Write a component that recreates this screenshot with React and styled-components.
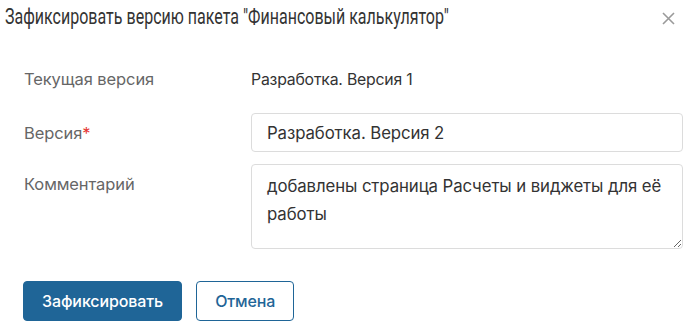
import React, { useState } from 'react';
import styled, { createGlobalStyle } from 'styled-components';

const GlobalStyle = createGlobalStyle`
  html, body {
    margin: 0;
    padding: 0;
    background: #fff;
  }
  * {
    box-sizing: border-box;
  }
`;

const Dialog = styled.div`
  width: 689px;
  height: 331px;
  background: #fff;
  font-family: Inter, "Noto Sans", sans-serif;
  display: flex;
  flex-direction: column;
`;

const Header = styled.div`
  display: flex;
  align-items: center;
  justify-content: space-between;
  height: 36px;
  padding: 0 14px 0 5px;
`;

// the original uses a condensed face; Roboto is squeezed to the same width
const Title = styled.h1`
  margin: 0 0 4px;
  font-family: Roboto, "Liberation Sans", sans-serif;
  font-size: 22px;
  font-weight: 400;
  color: #333;
  white-space: nowrap;
  transform: scaleX(0.728);
  transform-origin: left center;
`;

const CloseButton = styled.button`
  border: none;
  background: none;
  padding: 0;
  width: 14px;
  height: 14px;
  display: flex;
  align-items: center;
  justify-content: center;
  cursor: pointer;
`;

const Body = styled.div`
  padding: 28px 6px 0 24px;
  display: flex;
  flex-direction: column;
`;

const Row = styled.div`
  display: grid;
  grid-template-columns: 227px 1fr;
  align-items: ${(p) => (p.$top ? 'start' : 'center')};
  min-height: ${(p) => p.$h || 39}px;
  margin-top: ${(p) => p.$mt || 0}px;
`;

const Label = styled.label`
  font-size: 16.5px;
  letter-spacing: -0.1px;
  color: #666;
  padding-top: ${(p) => (p.$top ? '10px' : '0')};
`;

const Required = styled.span`
  color: #e53935;
`;

const Value = styled.div`
  font-size: 15.8px;
  letter-spacing: -0.2px;
  color: #333;
`;

const Input = styled.input`
  width: 100%;
  height: 39px;
  border: 1px solid #dcdcdc;
  border-radius: 4px;
  padding: 0 15px;
  font-family: inherit;
  font-size: 16.8px;
  letter-spacing: -0.1px;
  color: #333;
  outline: none;
`;

const TextArea = styled.textarea`
  width: 100%;
  height: 85px;
  border: 1px solid #dcdcdc;
  border-radius: 4px;
  padding: 7px 15px;
  font-family: inherit;
  font-size: 16.8px;
  letter-spacing: -0.1px;
  line-height: 28px;
  color: #333;
  outline: none;
  resize: vertical;
`;

const Footer = styled.div`
  display: flex;
  gap: 14px;
  padding: 32px 0 0 23px;
`;

const Button = styled.button`
  height: 40px;
  padding: 0 18px;
  border-radius: 4px;
  font-family: inherit;
  font-size: 16px;
  font-weight: 500;
  letter-spacing: -0.1px;
  cursor: pointer;
  border: 1px solid #1f6597;
  background: ${(p) => (p.$primary ? '#1f6597' : '#fff')};
  color: ${(p) => (p.$primary ? '#fff' : '#1f6597')};
`;

export default function App() {
  const [version, setVersion] = useState('Разработка. Версия 2');
  const [comment, setComment] = useState('добавлены страница Расчеты и виджеты для её работы');

  return (
    <>
      <GlobalStyle />
      <Dialog>
        <Header>
          <Title>Зафиксировать версию пакета "Финансовый калькулятор"</Title>
          <CloseButton aria-label="Закрыть">
            <svg width="13" height="13" viewBox="0 0 13 13">
              <path d="M1 1L12 12M12 1L1 12" stroke="#9a9a9a" strokeWidth="1.6" />
            </svg>
          </CloseButton>
        </Header>
        <Body>
          <Row $h={30}>
            <Label>Текущая версия</Label>
            <Value>Разработка. Версия 1</Value>
          </Row>
          <Row $mt={19}>
            <Label>
              Версия<Required>*</Required>
            </Label>
            <Input value={version} onChange={(e) => setVersion(e.target.value)} />
          </Row>
          <Row $top $mt={12}>
            <Label $top>Комментарий</Label>
            <TextArea value={comment} onChange={(e) => setComment(e.target.value)} />
          </Row>
        </Body>
        <Footer>
          <Button $primary>Зафиксировать</Button>
          <Button>Отмена</Button>
        </Footer>
      </Dialog>
    </>
  );
}
